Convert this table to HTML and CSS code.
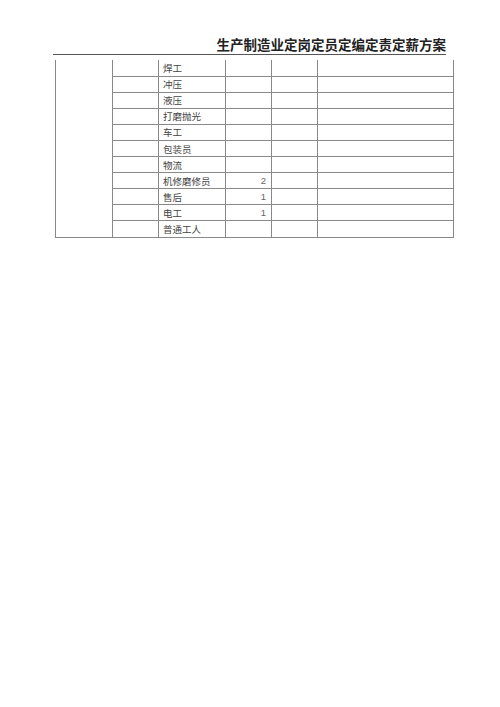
FILE: index.html
```html
<!DOCTYPE html>
<html lang="zh">
<head>
<meta charset="utf-8">
<link rel="stylesheet" href="styles.css">
</head>
<body>
<div class="page">
  <div class="header">
    <h1 class="title">生产制造业定岗定员定编定责定薪方案</h1>
  </div>
  <table class="grid">
    <colgroup>
      <col class="c1"><col class="c2"><col class="c3"><col class="c4"><col class="c5"><col class="c6">
    </colgroup>
    <tbody>
      <tr class="first"><td class="merged" rowspan="11"></td><td></td><td class="name">焊工</td><td class="num"></td><td></td><td></td></tr>
      <tr><td></td><td class="name">冲压</td><td class="num"></td><td></td><td></td></tr>
      <tr><td></td><td class="name">液压</td><td class="num"></td><td></td><td></td></tr>
      <tr><td></td><td class="name">打磨抛光</td><td class="num"></td><td></td><td></td></tr>
      <tr><td></td><td class="name">车工</td><td class="num"></td><td></td><td></td></tr>
      <tr><td></td><td class="name">包装员</td><td class="num"></td><td></td><td></td></tr>
      <tr><td></td><td class="name">物流</td><td class="num"></td><td></td><td></td></tr>
      <tr><td></td><td class="name">机修磨修员</td><td class="num">2</td><td></td><td></td></tr>
      <tr><td></td><td class="name">售后</td><td class="num">1</td><td></td><td></td></tr>
      <tr><td></td><td class="name">电工</td><td class="num">1</td><td></td><td></td></tr>
      <tr><td></td><td class="name">普通工人</td><td class="num"></td><td></td><td></td></tr>
    </tbody>
  </table>
</div>
</body>
</html>
```
FILE: styles.css
```css
html, body {
  margin: 0;
  padding: 0;
  background: #fff;
}
body {
  font-family: "Noto Sans CJK SC", "Liberation Sans", sans-serif;
  color: #333;
}
.page {
  padding-top: 34px;
}
.header {
  margin-left: 53px;
  width: 393px;
  border-bottom: 1px solid #555;
}
.title {
  margin: 0;
  font-size: 13.5px;
  font-weight: bold;
  line-height: 20px;
  text-align: right;
  color: #222;
  white-space: nowrap;
}
.grid {
  margin-left: 55px;
  margin-top: 5px;
  border-collapse: collapse;
  table-layout: fixed;
  width: 398px;
}
.c1 { width: 57px; }
.c2 { width: 46px; }
.c3 { width: 67px; }
.c4 { width: 46px; }
.c5 { width: 46px; }
.c6 { width: 136px; }
.grid tr {
  height: 16.1px;
}
.grid td {
  border: 1px solid #888;
  padding: 0 4px;
  font-size: 9.5px;
  line-height: 14px;
  color: #444;
  white-space: nowrap;
}
.grid tr.first td {
  border-top: none;
}
.grid td.num {
  text-align: right;
  font-family: "Liberation Sans", sans-serif;
  font-size: 9.5px;
  color: #666;
  padding-right: 5px;
}
```
